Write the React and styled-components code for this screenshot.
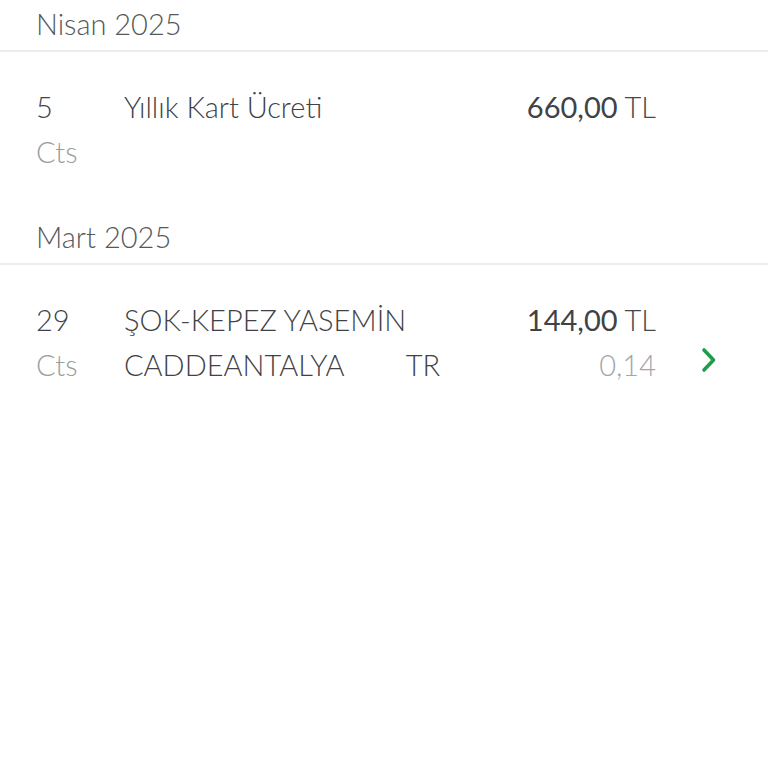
import React from 'react';
import styled, { createGlobalStyle } from 'styled-components';

const GlobalStyle = createGlobalStyle`
    html, body {
        margin: 0;
        padding: 0;
        background: #ffffff;
    }
    body {
        font-family: Lato, "Open Sans", sans-serif;
        -webkit-font-smoothing: antialiased;
    }
`;

const transactions = [
    {
        month: 'Nisan 2025',
        items: [
            { day: '5', weekday: 'Cts', lines: ['Yıllık Kart Ücreti'], amount: '660,00', points: null, detail: false },
        ],
    },
    {
        month: 'Mart 2025',
        items: [
            { day: '29', weekday: 'Cts', lines: ['ŞOK-KEPEZ YASEMİN', 'CADDEANTALYA        TR'], amount: '144,00', points: '0,14', detail: true },
        ],
    },
];

const Chevron = () => (
    <svg width="18" height="28" viewBox="0 0 18 28" fill="none">
        <path d="M4 4 L13.5 14 L4 24" stroke="#1f9d4d" strokeWidth="3.6" strokeLinecap="round" strokeLinejoin="round" />
    </svg>
);

const App = () => (
    <Page>
        <GlobalStyle />
        {transactions.map(section => (
            <Section key={section.month}>
                <MonthHeader>{section.month}</MonthHeader>
                {section.items.map(item => (
                    <Row key={item.day + item.amount}>
                        <DateCol>
                            <Day>{item.day}</Day>
                            <Weekday>{item.weekday}</Weekday>
                        </DateCol>
                        <Description>
                            {item.lines.map(line => <Line key={line}>{line}</Line>)}
                        </Description>
                        <AmountCol>
                            <Amount>
                                <strong>{item.amount}</strong> TL
                            </Amount>
                            {item.points && <Points>{item.points}</Points>}
                        </AmountCol>
                        <ArrowCol>{item.detail && <Chevron />}</ArrowCol>
                    </Row>
                ))}
            </Section>
        ))}
    </Page>
);

const Page = styled.div`
    width: 768px;
    min-height: 768px;
    background: #fff;
`;

const Section = styled.section`
    display: flex;
    flex-direction: column;
`;

const MonthHeader = styled.h2`
    margin: 0;
    box-sizing: border-box;
    height: 52px;
    display: flex;
    align-items: center;
    padding: 0 0 4px 36px;
    font-size: 29px;
    font-weight: 300;
    color: #55585b;
    border-bottom: 2px solid #ededed;
`;

const Row = styled.div`
    display: grid;
    grid-template-columns: 88px 1fr auto 112px;
    padding: 32px 0 39px 36px;
    font-size: 29px;
    font-weight: 300;
    line-height: 45px;
`;

const DateCol = styled.div`
    display: flex;
    flex-direction: column;
`;

const Day = styled.span`
    color: #3f4246;
`;

const Weekday = styled.span`
    color: #9a9da0;
`;

const Description = styled.div`
    display: flex;
    flex-direction: column;
    color: #3f4246;
`;

const Line = styled.span`
    white-space: pre;
`;

const AmountCol = styled.div`
    display: flex;
    flex-direction: column;
    align-items: flex-end;
`;

const Amount = styled.span`
    color: #45484c;
    strong {
        font-weight: 400;
        color: #3f4246;
    }
`;

const Points = styled.span`
    color: #a3a6a9;
`;

const ArrowCol = styled.div`
    display: flex;
    align-items: flex-end;
    justify-content: flex-end;
    padding: 0 50px 13px 0;
`;

export default App;
